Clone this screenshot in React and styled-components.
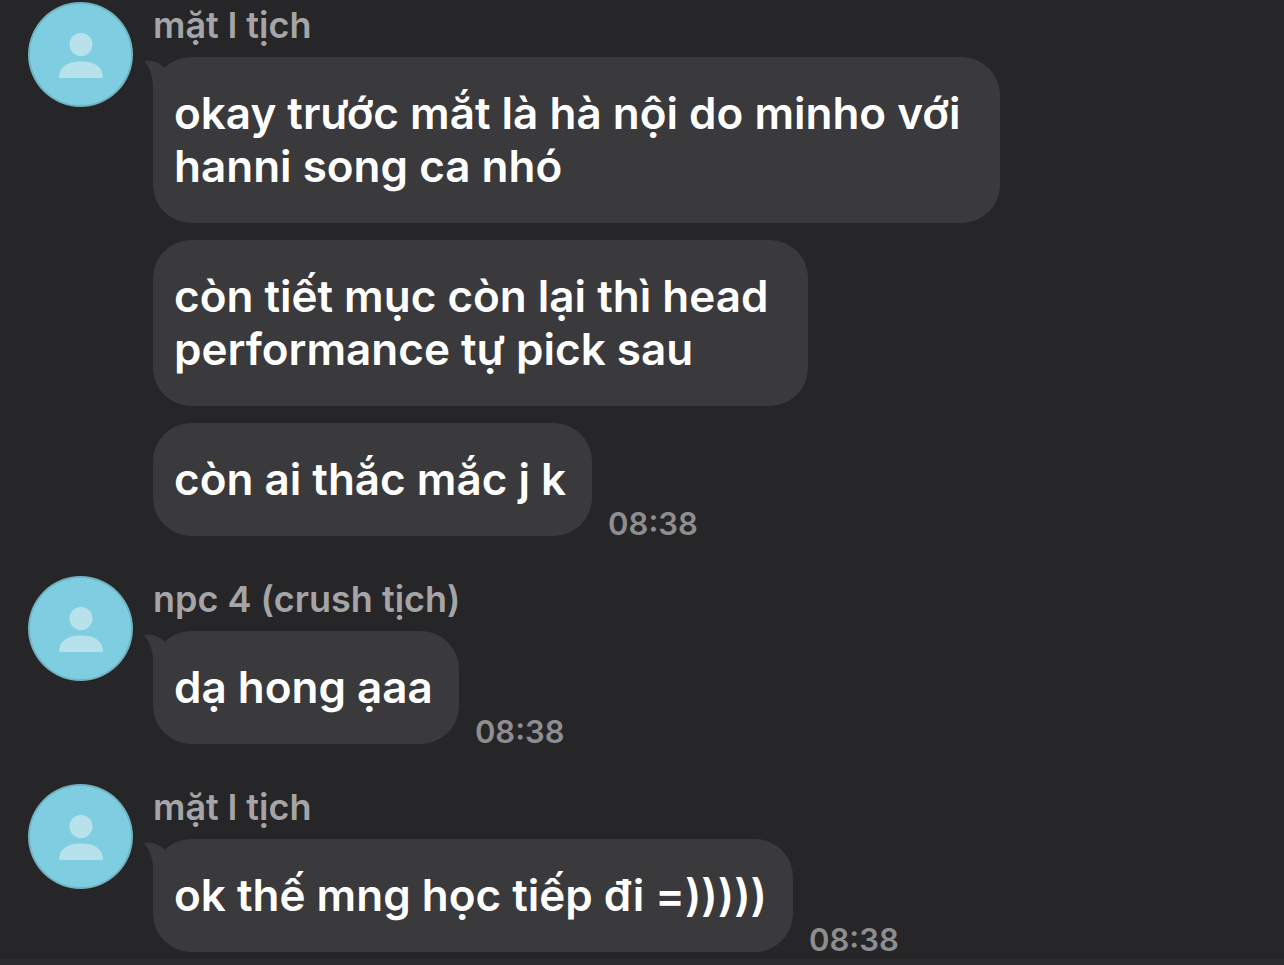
import styled, { createGlobalStyle } from "styled-components";

const GlobalStyle = createGlobalStyle`
    * {
        box-sizing: border-box;
    }

    body {
        margin: 0;
        background-color: #262628;
        font-family: Inter, "Liberation Sans", sans-serif;
    }
`;

const Chat = styled.main`
    display: flex;
    flex-direction: column;
    min-height: 100vh;
`;

const Conversation = styled.div`
    display: flex;
    flex-direction: column;
    flex: 1;
    gap: 40px;
    padding: 2px 28px 7px;
`;

const Group = styled.section`
    display: flex;
    align-items: flex-start;
    gap: 20px;
`;

const Avatar = styled.svg`
    flex: none;
    width: 105px;
    height: 105px;
`;

const Messages = styled.div`
    display: flex;
    flex-direction: column;
    align-items: flex-start;
    gap: 17px;
`;

const Sender = styled.h2`
    margin: 0 0 -8px;
    color: #a5a5a7;
    font-size: 36px;
    font-weight: 600;
    line-height: 46px;
`;

const MessageRow = styled.div`
    display: flex;
    align-items: flex-end;
    gap: 16px;
`;

const Bubble = styled.div`
    position: relative;
    padding: 30px ${({ $wrapped }) => ($wrapped ? 40 : 26)}px 30px 21px;
    border-radius: 38px;
    background-color: #3a3a3c;
`;

const Tail = styled.svg`
    position: absolute;
    top: 0;
    left: -9px;
    width: 50px;
    height: 40px;
`;

const Text = styled.p`
    margin: 0;
    color: #ffffff;
    font-size: 44px;
    font-weight: 600;
    line-height: 53px;
    white-space: pre-line;
`;

const Time = styled.time`
    color: #8e8e90;
    font-size: 31px;
    font-weight: 600;
    line-height: 24px;
`;

const Footer = styled.footer`
    height: 6px;
    background-color: #2c2c2e;
`;

const groups = [
    {
        sender: "mặt l tịch",
        messages: [
            "okay trước mắt là hà nội do minho với\nhanni song ca nhó",
            "còn tiết mục còn lại thì head\nperformance tự pick sau",
            "còn ai thắc mắc j k",
        ],
        time: "08:38",
    },
    {
        sender: "npc 4 (crush tịch)",
        messages: ["dạ hong ạaa"],
        time: "08:38",
    },
    {
        sender: "mặt l tịch",
        messages: ["ok thế mng học tiếp đi =)))))"],
        time: "08:38",
    },
];

function UserAvatar() {
    return (
        <Avatar viewBox="0 0 105 105" aria-hidden="true">
            <circle cx="52.5" cy="52.5" r="52.5" fill="#6fb4c1" />
            <circle cx="52.5" cy="52.5" r="50.5" fill="#7fcde1" />
            <circle cx="53" cy="42.5" r="11.5" fill="#b8e2eb" />
            <path d="M31 76C31 65 39 59.5 53 59.5S75 65 75 76Z" fill="#b8e2eb" />
        </Avatar>
    );
}

function MessageGroup({ sender, messages, time }) {
    return (
        <Group>
            <UserAvatar />
            <Messages>
                <Sender>{sender}</Sender>
                {messages.map((message, index) => (
                    <MessageRow key={message}>
                        <Bubble $wrapped={message.includes("\n")}>
                            {index === 0 && (
                                <Tail viewBox="0 0 50 40" aria-hidden="true">
                                    <path d="M0 4C8 3 15 5 21 11L36 26L9 40V30C9 20 6 11 0 4Z" fill="#3a3a3c" />
                                </Tail>
                            )}
                            <Text>{message}</Text>
                        </Bubble>
                        {index === messages.length - 1 && <Time>{time}</Time>}
                    </MessageRow>
                ))}
            </Messages>
        </Group>
    );
}

function App() {
    return (
        <>
            <GlobalStyle />
            <Chat>
                <Conversation>
                    {groups.map((group, index) => (
                        <MessageGroup key={index} {...group} />
                    ))}
                </Conversation>
                <Footer />
            </Chat>
        </>
    );
}

export default App;
